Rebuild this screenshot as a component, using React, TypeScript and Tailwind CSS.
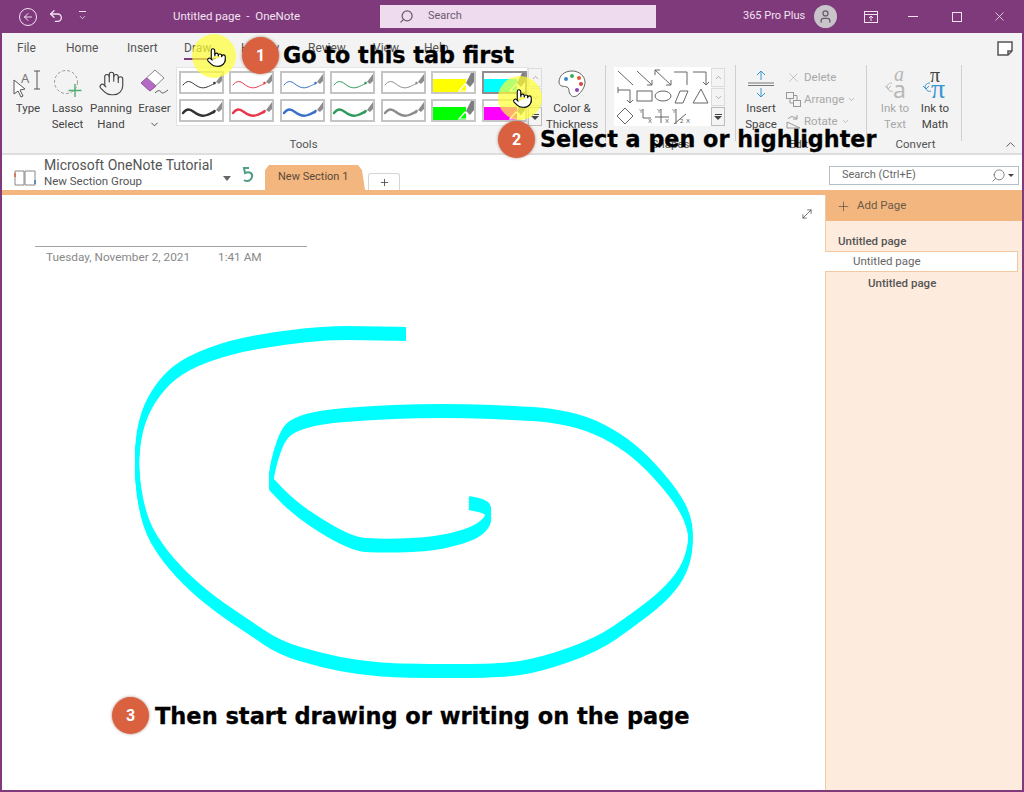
import { ArrowLeft, ChevronDown, ChevronUp, Hand, MoveDiagonal, Plus, Pointer, Search, Undo2, User, X } from "lucide-react"

type Pt = [number, number]

// chisel tip highlighter: same line stacked up, so it is thin going up/down and thick going sideways
const TIP_OFFSETS = [-5, -2.5, 0, 2.5, 5]
const outer: Pt[] = [[406, 334], [366, 333], [327, 333], [280, 338], [230, 347], [187, 363], [163, 382], [145, 410], [137, 443], [137, 483], [145, 523], [160, 550], [183, 577], [213, 603], [253, 630], [280, 648], [320, 660], [360, 668], [403, 671], [500, 671], [540, 665], [597, 645], [633, 620], [663, 597], [683, 573], [691, 547], [690, 523], [677, 497], [647, 462], [620, 440], [587, 423], [550, 415], [517, 413], [467, 411], [417, 411], [370, 413], [320, 417], [293, 425], [283, 435], [275, 457], [271, 477], [271, 484], [271, 484], [293, 507], [327, 530], [353, 543], [370, 546], [427, 545], [460, 538], [480, 530], [490, 518], [488, 507], [469, 503]]

function inkPath(p: Pt[]) {
  let d = `M${p[0][0]} ${p[0][1]}`
  for (let i = 1; i < p.length - 1; i++) {
    const mx = (p[i][0] + p[i + 1][0]) / 2
    const my = (p[i][1] + p[i + 1][1]) / 2
    d += ` Q${p[i][0]} ${p[i][1]} ${mx} ${my}`
  }
  const last = p[p.length - 1]
  return d + ` L${last[0]} ${last[1]}`
}

const pens = [
  { color: "#333333" },
  { color: "#e8394a" },
  { color: "#3b70c8" },
  { color: "#2f9a5a" },
  { color: "#8c8c8c" },
]

function PenCell({ color, thick }: { color: string; thick?: boolean }) {
  return (
    <div className="w-[45px] h-[23px] border-2 border-[#c4c4c4] bg-white">
      <svg width="41" height="19" viewBox="0 0 41 19">
        <path d="M2 12c4-5 7-4 11-1s8 5 13 3 4-2 7-3" fill="none" stroke={color} strokeWidth={thick ? 2.4 : 1} strokeLinecap="round" />
        <circle cx="33.5" cy="10" r="1.3" fill={color} />
        <path d="M35 9l6-8v7l-3 3z" fill="#8d8d8d" />
      </svg>
    </div>
  )
}

function MarkerCell({ color, active }: { color: string; active?: boolean }) {
  return (
    <div className={`w-[45px] h-[23px] border-2 ${active ? "border-[#8f8f8f]" : "border-[#c8c8c8]"} bg-white`}>
      <svg width="41" height="19" viewBox="0 0 41 19">
        <rect x="0" y="6" width="33" height="13" fill={color} />
        <path d="M26 18l6-7 5 7z" fill="none" stroke="#ffffff" strokeWidth="1.2" />
        <path d="M33 10l5-10h3v9l-4 5z" fill="#7f7f7f" />
      </svg>
    </div>
  )
}

function GalleryScroll() {
  return (
    <div className="w-[14px] h-[58px] flex flex-col gap-[1px] text-[#9a9a9a]">
      <div className="flex-1 border border-[#dcdcdc] bg-[#f4f4f4] flex items-center justify-center"><ChevronUp size={9} /></div>
      <div className="flex-1 border border-[#dcdcdc] bg-[#f4f4f4] flex items-center justify-center"><ChevronDown size={9} /></div>
      <div className="flex-1 border border-[#bdbdbd] bg-[#f4f4f4] flex flex-col items-center justify-center text-[#444]">
        <div className="w-[7px] h-[1px] bg-[#444] mb-[1px]" />
        <div className="w-0 h-0 border-x-[4px] border-x-transparent border-t-[4px] border-t-[#444]" />
      </div>
    </div>
  )
}

function RibbonTool({ width, lines, icon, muted }: { width: string; lines: string[]; icon: React.ReactNode; muted?: boolean }) {
  return (
    <div className={`${width} flex flex-col items-center shrink-0`}>
      <div className="h-[31px] flex items-center justify-center">{icon}</div>
      <div className={`mt-[1px] text-center text-[11.5px] leading-[16px] whitespace-nowrap ${muted ? "text-[#a8a8a8]" : "text-[#444]"}`}>
        {lines.map(l => <div key={l}>{l}</div>)}
      </div>
    </div>
  )
}

function ShapesGallery() {
  const s = "#666"
  return (
    <svg width="97" height="58" viewBox="0 0 97 58" fill="none" stroke={s} strokeWidth="1">
      <path d="M4 4L19 18" />
      <path d="M23 4L38 18M38 13v5h-5" />
      <path d="M41 3L57 18M41 8V3h5M57 13v5h-5" />
      <path d="M60 5H73V18" />
      <path d="M79 5H92V18M89 15l3 3 3-3" />
      <path d="M4 23H16V36M4 20v6M13 33l3 3 3-3" />
      <rect x="23" y="24" width="15" height="10" />
      <ellipse cx="49" cy="29" rx="8" ry="5" />
      <path d="M61 36l5-12h8l-5 12z" />
      <path d="M79 36l8-14 7 14z" />
      <path d="M11 41l8 8-8 8-8-8z" />
      <path d="M29 42v9h8" />
      <path d="M47 42v14M41 50h14" />
      <path d="M62 42v15M60 57l12-10" />
      <g fill="#555" stroke="none" fontSize="6" fontFamily="Liberation Sans, sans-serif">
        <text x="25" y="46">Y</text>
        <text x="34" y="56">X</text>
        <text x="43" y="46">Y</text>
        <text x="51" y="56">X</text>
        <text x="58" y="46">Y</text>
        <text x="66" y="56">2</text>
        <text x="72" y="56">X</text>
      </g>
    </svg>
  )
}

function Step({ n, label, className, textClass }: { n: number; label: string; className: string; textClass: string }) {
  return (
    <div className={`absolute flex items-center ${className}`}>
      <div className="w-[37px] h-[37px] rounded-full bg-[#d9613f] text-white font-bold text-[16px] flex items-center justify-center shadow-[0_0_3px_rgba(120,60,40,0.6)]">
        {n}
      </div>
      <span className={`font-['DejaVu_Sans',sans-serif] font-bold text-black whitespace-nowrap [-webkit-text-stroke:0.3px_black] ${textClass}`}>{label}</span>
    </div>
  )
}

export default function App() {
  return (
    <div className="relative w-[1024px] h-[792px] overflow-hidden flex flex-col bg-white border-x-2 border-b-2 border-[#80397b] font-['Roboto','Noto_Sans',sans-serif] text-[#444]">
      {/* title bar */}
      <div className="h-[33px] -mx-[2px] bg-[#7f3a7c] flex items-center text-[#f3e3f1] text-[11.5px] shrink-0">
        <div className="w-[18px] h-[18px] ml-[19px] rounded-full border border-[#f3e3f1] flex items-center justify-center"><ArrowLeft size={12} /></div>
        <Undo2 size={16} className="ml-[11px] -mt-[2px]" />
        <div className="ml-[14px] flex flex-col items-center">
          <div className="w-[7px] h-[1px] bg-[#f3e3f1] mb-[1px]" />
          <ChevronDown size={9} />
        </div>
        <span className="ml-[86px] w-[207px] whitespace-pre">Untitled page  -  OneNote</span>
        <div className="w-[276px] h-[23px] bg-[#eedcee] flex items-center text-[#6d5a6d] text-[11px]">
          <Search size={15} className="ml-[19px] -scale-x-100" />
          <span className="ml-[14px]">Search</span>
        </div>
        <span className="ml-[87px] w-[71px] whitespace-nowrap text-[11px]">365 Pro Plus</span>
        <div className="w-[23px] h-[23px] rounded-full bg-[#c9c4c9] flex items-center justify-center text-[#6a5a6a]"><User size={15} /></div>
        <svg className="ml-[27px]" width="14" height="12" viewBox="0 0 14 12" fill="none" stroke="#f3e3f1">
          <rect x="0.5" y="0.5" width="13" height="11" />
          <path d="M0.5 3.5h13M7 10V5M5 7l2-2 2 2" />
        </svg>
        <div className="ml-[30px] w-[10px] h-[1px] bg-[#f3e3f1]" />
        <div className="ml-[34px] w-[10px] h-[10px] border border-[#f3e3f1]" />
        <X size={15} className="ml-[30px]" strokeWidth={1.25} />
      </div>

      {/* ribbon */}
      <div className="h-[122px] bg-[#f3f3f3] border-b-2 border-[#dedede] shrink-0 relative">
        <div className="h-[35px] flex items-center text-[12px] text-[#555] pb-[6px] pl-[15px]">
          <span className="w-[49px]">File</span>
          <span className="w-[61px]">Home</span>
          <span className="w-[57px]">Insert</span>
          <span className="w-[57px] relative">Draw<span className="absolute left-0 top-[19px] w-[32px] h-[2px] bg-[#80397b]" /></span>
          <span className="w-[67px]">History</span>
          <span className="w-[65px]">Review</span>
          <span className="w-[51px]">View</span>
          <span>Help</span>
        </div>
        <div className="flex pl-[6px] items-start">
          <RibbonTool width="w-[40px]" lines={["Type"]} icon={
            <svg width="30" height="27" viewBox="0 0 30 27" fill="none" stroke="#555" strokeWidth="1" className="overflow-visible">
              <path d="M1 10l11 9-5 1 3 6-2 1-3-6-4 3z" fill="#fff" />
              <text x="8" y="13" fontSize="13" fill="#777" stroke="none" fontFamily="Noto Sans, sans-serif">A</text>
              <path d="M21 1h6M24 1v18M21 19h6" />
            </svg>
          } />
          <RibbonTool width="w-[39px]" lines={["Lasso", "Select"]} icon={
            <svg width="30" height="30" viewBox="0 0 30 30" fill="none">
              <circle cx="13" cy="13" r="11.5" stroke="#999" strokeDasharray="3 2" />
              <path d="M22 15v13M15.500 21.500h13" stroke="#4fae6e" strokeWidth="1.400" />
            </svg>
          } />
          <RibbonTool width="w-[48px]" lines={["Panning", "Hand"]} icon={<Hand size={27} strokeWidth={1} className="text-[#444]" />} />
          <div className="w-[39px] shrink-0 flex flex-col items-center">
            <div className="h-[31px] flex items-center justify-center">
              <svg width="30" height="29" viewBox="0 0 30 29" fill="none">
                <path d="M1 14L15 1l9 8-14 13z" fill="#fff" stroke="#888" />
                <path d="M1 14l6-5 9 8-6 5z" fill="#b56bc5" stroke="#9a58a8" />
                <path d="M15 24c3-3 5-3 6-1s3 1 7-2" stroke="#555" />
              </svg>
            </div>
            <div className="mt-[1px] text-[11.5px] leading-[16px]">Eraser</div>
            <ChevronDown size={11} className="mt-[3px]" />
          </div>
          <div className="ml-[2px] w-[352px] h-[59px] bg-white border border-[#e4e4e4] shrink-0 grid grid-cols-7 gap-x-[5px] gap-y-[5px] pl-[2px] pt-[3px] content-start -mt-[1px]">
            {pens.map(p => <PenCell key={p.color} color={p.color} />)}
            <MarkerCell color="#ffff00" />
            <MarkerCell color="#00ffff" active />
            {pens.map(p => <PenCell key={p.color + "2"} color={p.color} thick />)}
            <MarkerCell color="#00ff00" />
            <MarkerCell color="#ff00ff" />
          </div>
          <GalleryScroll />
          <RibbonTool width="w-[58px] ml-[1px]" lines={["Color &", "Thickness"]} icon={
            <svg width="30" height="30" viewBox="0 0 30 30">
              <path d="M15 2C7 2 2 7 2 13c0 5 5 4 8 5s1 4 3 7 5 4 9 0c4-4 6-8 6-12C28 7 22 2 15 2z" fill="#fff" stroke="#666" />
              <circle cx="9" cy="10" r="2" fill="#3b82c8" />
              <circle cx="15" cy="7" r="2" fill="#3fae5a" />
              <circle cx="22" cy="9" r="2" fill="#e4572e" />
              <circle cx="24" cy="15" r="2" fill="#d8433f" />
              <circle cx="20" cy="21" r="2" fill="#8e44ad" />
            </svg>
          } />
          <div className="w-[1px] h-[76px] bg-[#cfcfcf] ml-[4px] -mt-[3px] shrink-0" />
          <div className="ml-[8px] bg-white w-[97px] h-[59px] -mt-[1px] shrink-0"><ShapesGallery /></div>
          <GalleryScroll />
          <div className="w-[1px] h-[76px] bg-[#cfcfcf] ml-[10px] -mt-[3px] shrink-0" />
          <RibbonTool width="w-[50px]" lines={["Insert", "Space"]} icon={
            <svg width="26" height="28" viewBox="0 0 26 28" fill="none" stroke="#3b97d3">
              <path d="M13 1v9M9 5l4-4 4 4M13 18v9M9 23l4 4 4-4" />
              <path d="M0 13h26M0 15.500h26" stroke="#777" />
            </svg>
          } />
          <div className="w-[80px] shrink-0 text-[11.5px] text-[#a8a8a8] flex flex-col gap-[7px] pt-[2px]">
            <div className="flex items-center gap-[3px] h-[15px]"><X size={15} strokeWidth={1} /><span>Delete</span></div>
            <div className="flex items-center gap-[3px] h-[15px]">
              <svg width="15" height="15" viewBox="0 0 15 15" fill="none" stroke="#999"><rect x="0.5" y="0.5" width="7" height="6" /><rect x="7.500" y="8.500" width="7" height="6" /><path d="M4 7v4h3M8 3.500h3V8" /></svg>
              <span>Arrange</span><ChevronDown size={9} />
            </div>
            <div className="flex items-center gap-[3px] h-[15px]">
              <svg width="15" height="15" viewBox="0 0 15 15" fill="none" stroke="#999"><path d="M1 14h13L1 8zM2 5c2-3 6-3 9 0M11 1v4H7" /></svg>
              <span>Rotate</span><ChevronDown size={9} />
            </div>
          </div>
          <div className="w-[1px] h-[76px] bg-[#cfcfcf] -mt-[3px] shrink-0" />
          <RibbonTool width="w-[44px] ml-[6px]" muted lines={["Ink to", "Text"]} icon={
            <svg width="30" height="30" viewBox="0 0 30 30" fill="none" stroke="#b8b8b8" className="overflow-visible">
              <path d="M12 14c-4 0-6 3-4 6 1 2 3 3 5 2M5 17l3 3 3-3" />
              <g fill="#b8b8b8" stroke="none" fontFamily="Liberation Serif, serif">
                <text x="14" y="12" fontSize="20" fontStyle="italic">a</text>
                <text x="13" y="29" fontSize="23" fontFamily="Noto Sans, sans-serif">a</text>
              </g>
            </svg>
          } />
          <RibbonTool width="w-[36px]" lines={["Ink to", "Math"]} icon={
            <svg width="30" height="30" viewBox="0 0 30 30" fill="none" stroke="#3b97d3" className="overflow-visible">
              <path d="M10 14c-4 0-6 3-4 6 1 2 3 3 5 2M3 17l3 3 3-3" />
              <text x="10" y="13" fontSize="20" fill="#444" stroke="none" fontFamily="Liberation Serif, serif">π</text>
              <text x="11" y="29" fontSize="28" fill="#3b97d3" stroke="none" fontFamily="Liberation Serif, serif">π</text>
            </svg>
          } />
          <div className="w-[1px] h-[76px] bg-[#cfcfcf] ml-[8px] -mt-[3px] shrink-0" />
        </div>
        {/* group captions sit on one line under the galleries */}
        <div className="absolute left-0 bottom-[1px] w-full h-[16px] text-[11.5px] text-[#555] flex text-center">
          <span className="w-[603px]">Tools</span>
          <span className="w-[131px]">Shapes</span>
          <span className="w-[125px]">Edit</span>
          <span className="w-[109px]">Convert</span>
          <ChevronUp size={15} className="ml-[33px] mt-[1px]" strokeWidth={1.5} />
        </div>
        <svg className="absolute right-[9px] top-[8px]" width="16" height="15" viewBox="0 0 16 15" fill="#fff" stroke="#555" strokeWidth="1.500">
          <path d="M1 1h14v9l-4 4H1zM11 14v-4h4" />
        </svg>
      </div>

      {/* notebook bar */}
      <div className="h-[35px] bg-white flex items-end shrink-0 relative">
        <svg className="ml-[12px] mb-[3px]" width="22" height="18" viewBox="0 0 22 18" fill="none" stroke="#888" strokeWidth="1">
          <path d="M1 2h9v14H1zM11 2h10v14H11z" />
          <path d="M1 4v4" stroke="#d9613f" strokeWidth="1.500" />
          <path d="M21 11v4" stroke="#3b7ea8" strokeWidth="1.500" />
        </svg>
        <div className="ml-[8px] w-[179px] mb-[2px]">
          <div className="text-[14px] leading-[18px] text-[#555] whitespace-nowrap">Microsoft OneNote Tutorial</div>
          <div className="text-[11.5px] leading-[14px] text-[#555] whitespace-nowrap">New Section Group</div>
        </div>
        <div className="mb-[9px] w-0 h-0 border-x-[4px] border-x-transparent border-t-[5px] border-t-[#666]" />
        <svg className="ml-[11px] mb-[7px]" width="12" height="16" viewBox="0 0 12 16" fill="none" stroke="#4f9e86" strokeWidth="2">
          <path d="M7 1H2l1 5c4-2 8 0 7 4s-5 5-8 3" />
        </svg>
        <div className="ml-[11px] w-[100px] h-[25px] bg-[#f3b67f] text-[#5a4a3a] text-[11px] flex items-center pl-[13px] [clip-path:polygon(0_5px,4px_0,93px_0,97px_5px,100px_100%,0_100%)]">New Section 1</div>
        <div className="ml-[3px] w-[32px] h-[17px] bg-white border border-b-0 border-[#d5d5d5] rounded-t-[3px] flex items-center justify-center text-[#555]"><Plus size={11} strokeWidth={2} /></div>
        <div className="absolute left-[827px] top-[11px] w-[190px] h-[19px] border border-[#b5bec6] bg-white flex items-center text-[11px] text-[#666] pl-[12px]">
          <span className="flex-1">Search (Ctrl+E)</span>
          <Search size={15} strokeWidth={1.25} className="-scale-x-100" />
          <div className="ml-[2px] mr-[4px] w-0 h-0 border-x-[3px] border-x-transparent border-t-[3px] border-t-[#444]" />
        </div>
      </div>
      <div className="h-[5px] -ml-[2px] -mr-[2px] bg-[#f3b67f] shrink-0" />

      {/* page + page list */}
      <div className="flex-1 flex min-h-0">
        <div className="w-[823px] relative">
          <div className="ml-[33px] mt-[51px] w-[272px] border-t border-[#a3a3a3] pl-[11px] pt-[2px] text-[11.8px] leading-[16px] text-[#888] flex">
            <span className="w-[172px]">Tuesday, November 2, 2021</span>
            <span>1:41 AM</span>
          </div>
          <MoveDiagonal size={14} strokeWidth={1.25} className="absolute left-[798px] top-[12px] text-[#444]" />
        </div>
        <div className="flex-1 bg-[#fdebdd] border-l border-[#f3c9a2] text-[11.5px]">
          <div className="h-[26px] bg-[#f3b67f] flex items-center pl-[10px] pb-[4px] text-[#6a5a48]">
            <Plus size={15} strokeWidth={1} className="text-[#444]" />
            <span className="ml-[6px]">Add Page</span>
          </div>
          <div className="pl-[12px] pt-[12px] h-[30px] leading-[16px] font-medium text-[#555]">Untitled page</div>
          <div className="h-[21px] mr-[4px] -ml-[1px] bg-white border border-[#f3c9a2] border-l-0 pl-[28px] flex items-center text-[#666]">Untitled page</div>
          <div className="pl-[42px] pt-[3px] leading-[16px] font-medium text-[#555]">Untitled page</div>
        </div>
      </div>

      {/* the highlighter stroke drawn on the page */}
      <svg className="absolute left-[-2px] top-0 pointer-events-none" width="1024" height="792" viewBox="0 0 1024 792">
        {TIP_OFFSETS.map(dy => (
          <path key={dy} d={inkPath(outer)} transform={`translate(0 ${dy})`} fill="none" stroke="#00ffff" strokeWidth="4" strokeLinejoin="round" />
        ))}
      </svg>

      {/* callouts over the screenshot */}
      <div className="absolute left-[190px] top-[34px] w-[44px] h-[44px] rounded-full bg-[#ffff33]/70" />
      <div className="absolute left-[496px] top-[76px] w-[44px] h-[44px] rounded-full bg-[#ffff33]/70" />
      <Pointer size={21} strokeWidth={1.25} fill="#fff" className="absolute left-[204px] top-[47px] text-black" />
      <Pointer size={21} strokeWidth={1.25} fill="#fff" className="absolute left-[510px] top-[88px] text-black" />
      <Step n={1} label="Go to this tab first" className="left-[240px] top-[37px] gap-[4px]" textClass="text-[22.3px] pt-[1px]" />
      <Step n={2} label="Select a pen or highlighter" className="left-[496px] top-[121px] gap-[5px]" textClass="text-[22.3px]" />
      <Step n={3} label="Then start drawing or writing on the page" className="left-[110px] top-[697px] gap-[6px]" textClass="text-[22.5px] pt-[2px]" />
    </div>
  )
}
